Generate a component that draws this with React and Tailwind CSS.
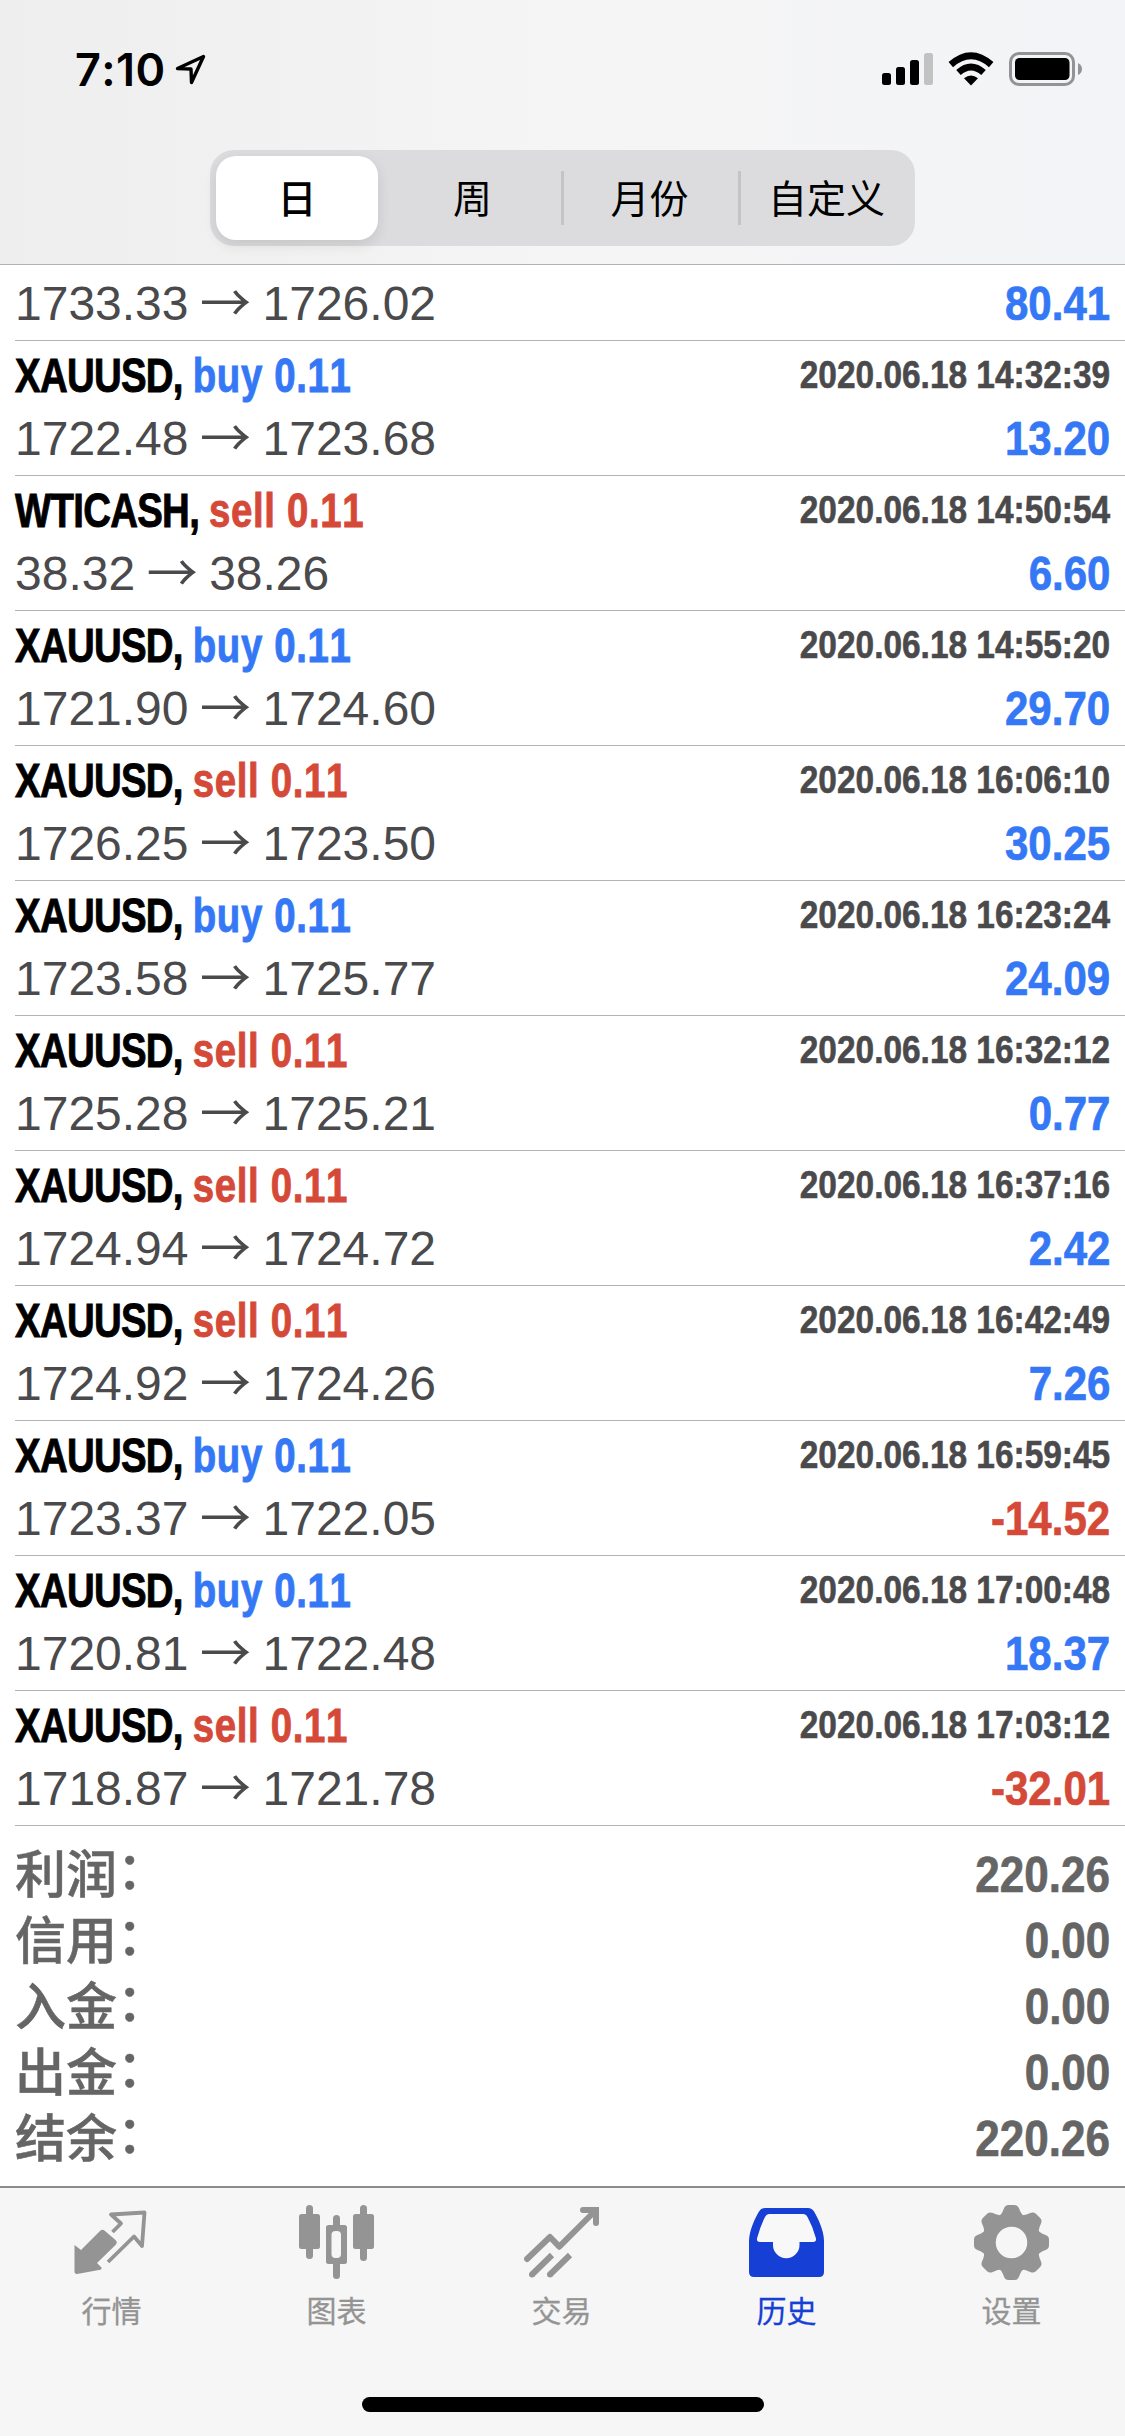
import React, { useState } from "react";

const deals = [
  { symbol: "XAUUSD", side: "buy", volume: "0.11", time: "2020.06.18 14:32:39", open: "1722.48", close: "1723.68", profit: "13.20" },
  { symbol: "WTICASH", side: "sell", volume: "0.11", time: "2020.06.18 14:50:54", open: "38.32", close: "38.26", profit: "6.60" },
  { symbol: "XAUUSD", side: "buy", volume: "0.11", time: "2020.06.18 14:55:20", open: "1721.90", close: "1724.60", profit: "29.70" },
  { symbol: "XAUUSD", side: "sell", volume: "0.11", time: "2020.06.18 16:06:10", open: "1726.25", close: "1723.50", profit: "30.25" },
  { symbol: "XAUUSD", side: "buy", volume: "0.11", time: "2020.06.18 16:23:24", open: "1723.58", close: "1725.77", profit: "24.09" },
  { symbol: "XAUUSD", side: "sell", volume: "0.11", time: "2020.06.18 16:32:12", open: "1725.28", close: "1725.21", profit: "0.77" },
  { symbol: "XAUUSD", side: "sell", volume: "0.11", time: "2020.06.18 16:37:16", open: "1724.94", close: "1724.72", profit: "2.42" },
  { symbol: "XAUUSD", side: "sell", volume: "0.11", time: "2020.06.18 16:42:49", open: "1724.92", close: "1724.26", profit: "7.26" },
  { symbol: "XAUUSD", side: "buy", volume: "0.11", time: "2020.06.18 16:59:45", open: "1723.37", close: "1722.05", profit: "-14.52" },
  { symbol: "XAUUSD", side: "buy", volume: "0.11", time: "2020.06.18 17:00:48", open: "1720.81", close: "1722.48", profit: "18.37" },
  { symbol: "XAUUSD", side: "sell", volume: "0.11", time: "2020.06.18 17:03:12", open: "1718.87", close: "1721.78", profit: "-32.01" },
];

const summary = [
  { label: "利润", value: "220.26" },
  { label: "信用", value: "0.00" },
  { label: "入金", value: "0.00" },
  { label: "出金", value: "0.00" },
  { label: "结余", value: "220.26" },
];

const periods = ["日", "周", "月份", "自定义"];

const StatusBar = () => (
  <div className="flex h-[138px] items-center justify-between pl-[75px] pr-[42px]">
    <div className="flex items-center gap-[9px]">
      <span className="font-['Inter',sans-serif] text-[45px] font-semibold leading-none tracking-[0.4px]">7:10</span>
      <svg width="31" height="31" viewBox="0 0 31 31" fill="none" stroke="black" strokeWidth="3.4" strokeLinejoin="round">
        <path d="M28.5 2.5 L2.5 14.5 L16 15 L16.5 28.5 Z" />
      </svg>
    </div>
    <div className="flex items-center">
      <svg width="52" height="34" viewBox="0 0 52 34">
        <rect x="0" y="21" width="9" height="12" rx="2.5" />
        <rect x="14" y="15" width="9" height="18" rx="2.5" />
        <rect x="28" y="8" width="9" height="25" rx="2.5" />
        <rect x="42" y="1" width="9" height="32" rx="2.5" fill="#c2c2c3" />
      </svg>
      <svg className="ml-[14px]" width="46" height="34" viewBox="0 0 46 34">
        <path d="M23 33.5 L16 26.3 Q23 20.5 30 26.3 Z" />
        <path d="M10.5 20.5 Q23 9.5 35.5 20.5" fill="none" stroke="black" strokeWidth="6.8" />
        <path d="M2.8 12.6 Q23 -5.2 43.2 12.6" fill="none" stroke="black" strokeWidth="6.8" />
      </svg>
      <svg className="ml-[15px]" width="74" height="34" viewBox="0 0 74 34">
        <rect x="1.5" y="1.5" width="63" height="31" rx="8.5" fill="none" stroke="#939395" strokeWidth="3" />
        <rect x="6" y="6" width="54.5" height="22" rx="4.5" />
        <path d="M69 11 Q73 13 73 17 Q73 21 69 23 Z" fill="#939395" />
      </svg>
    </div>
  </div>
);

const DealRow = ({ deal }) => (
  <div className="ml-[15px] flex h-[135px] flex-col border-b border-[#b4b4b6] pr-[15px] pt-[3px]">
    <div className="flex h-[63px] justify-between font-bold leading-[63px]">
      <div className="flex origin-left scale-x-80 whitespace-pre text-[48px] [-webkit-text-stroke:0.9px]">
        <span className="tracking-[-0.9px]">{deal.symbol}, </span>
        <span className={`tracking-[0.8px] ${deal.side === "buy" ? "text-[#3478f6]" : "text-[#d54938]"}`}>
          {deal.side} {deal.volume}
        </span>
      </div>
      <div className="origin-right scale-x-[0.857] text-[39px] leading-[61px] text-[#4a4a4c] [-webkit-text-stroke:0.6px]">{deal.time}</div>
    </div>
    <PriceLine deal={deal} />
  </div>
);

const PriceLine = ({ deal }) => (
  <div className="flex h-[63px] justify-between leading-[63px]">
    <div className="flex gap-[13px] text-[48px] text-[#4a4a4c]">
      <span>{deal.open}</span>
      <span className="-mt-[3px] flex w-12 justify-center font-['Noto_Sans_CJK_SC',sans-serif] text-[51px]">→</span>
      <span>{deal.close}</span>
    </div>
    <div
      className={`origin-right scale-x-[0.875] text-[48px] font-bold [-webkit-text-stroke:0.7px] ${
        deal.profit.startsWith("-") ? "text-[#d54938]" : "text-[#3478f6]"
      }`}
    >
      {deal.profit}
    </div>
  </div>
);

const QuotesIcon = () => (
  <svg width="75" height="75" viewBox="0 0 75 75">
    <path d="M0.5 40 L7 45 L26 26 Q28.5 23.5 31 26 L41.5 35 Q44 37.5 41.5 40 L23 58 L27.5 62.5 Q28 64.5 25 65 L3 69 Q0.5 69 0.5 66.5 Z" />
    <path d="M38.5 27 L47 18.5 L37 9.5 L70.5 7.5 L68 41 L60 31.5 L34 57" fill="none" stroke="currentColor" strokeWidth="3.8" strokeLinejoin="round" />
  </svg>
);

const ChartIcon = () => (
  <svg width="75" height="75" viewBox="0 0 75 75">
    <rect x="7" y="0" width="7" height="54" rx="3.5" />
    <rect x="0" y="9" width="21" height="35" rx="2.5" />
    <rect x="34" y="10" width="7" height="64" rx="3.5" />
    <rect x="27" y="20" width="21" height="39" rx="2.5" />
    <rect x="32.5" y="26" width="9.5" height="27" rx="4" fill="#f6f6f6" />
    <rect x="61" y="0" width="7" height="56" rx="3.5" />
    <rect x="54" y="9" width="21" height="35" rx="2.5" />
  </svg>
);

const TradeIcon = () => (
  <svg width="75" height="75" viewBox="0 0 75 75" fill="none" stroke="currentColor" strokeWidth="6">
    <path d="M3 54 L26 32 L35.3 41.7 L71 6" strokeLinecap="round" strokeLinejoin="round" />
    <path d="M59 5 H72 V18" strokeLinecap="round" />
    <path d="M8 69.5 L28 50 M26 69.5 L46 50" />
    <g fill="currentColor" stroke="none">
      <circle cx="8" cy="69.5" r="3" />
      <circle cx="26" cy="69.5" r="3" />
    </g>
  </svg>
);

const HistoryIcon = () => (
  <svg width="75" height="75" viewBox="0 0 75 75">
    <path d="M0 67 V36 C0 26 6 13 10 6.5 Q12 3 16 3 H59 Q63 3 65 6.5 C69 13 75 26 75 36 V67 Q75 72 70 72 H5 Q0 72 0 67 Z" />
    <path d="M20 9 H54 Q57 9 58.5 12 Q64 22 67 33.5 Q67.5 37 64 37 H50.5 V40 A13 13 0 0 1 24 40 V37 H11 Q7.5 37 8 33.5 Q11 22 16 12 Q17.5 9 20 9 Z" fill="#f8f8f8" />
  </svg>
);

const SettingsIcon = () => (
  <svg width="75" height="75" viewBox="0 0 75 75">
    <g transform="translate(37.5 37.5)">
      <circle r="22" fill="none" stroke="currentColor" strokeWidth="12.5" />
      {[0, 45, 90, 135, 180, 225, 270, 315].map((angle) => (
        <path
          key={angle}
          transform={`rotate(${angle})`}
          d="M-13 -26 Q-10 -28 -8.8 -31 L-7.6 -34 Q-6.3 -37.5 -3 -37.5 H3 Q6.3 -37.5 7.6 -34 L8.8 -31 Q10 -28 13 -26 L8 -20 H-8 Z"
        />
      ))}
    </g>
  </svg>
);

const tabs = [
  { label: "行情", icon: QuotesIcon },
  { label: "图表", icon: ChartIcon },
  { label: "交易", icon: TradeIcon },
  { label: "历史", icon: HistoryIcon },
  { label: "设置", icon: SettingsIcon },
];

const App = () => {
  const [period, setPeriod] = useState(0);
  const [tab, setTab] = useState(3);

  return (
    <div className="flex h-[2436px] w-[1125px] flex-col overflow-hidden bg-white font-['Liberation_Sans','Noto_Sans_CJK_SC',sans-serif] text-black [font-kerning:none]">
      <header className="h-[265px] shrink-0 border-b border-[#b2b2b3] bg-linear-to-r from-[#eeeeef] via-[#f5f5f5] to-[#f3f4f7]">
        <StatusBar />
        <div className="mx-auto mt-3 grid h-24 w-[705px] grid-cols-[174px_177px_177px_177px] items-center rounded-[24px] bg-[#dcdcde] font-['Noto_Sans_CJK_SC',sans-serif] text-[39px]">
          {periods.map((name, i) => (
            <button
              key={name}
              onClick={() => setPeriod(i)}
              className={`flex items-center justify-center pb-[3px] leading-none ${
                i === period ? "mx-[6px] h-[84px] rounded-[20px] bg-white font-medium shadow-[0_5px_14px_rgba(0,0,0,0.1)]" : "h-[54px]"
              } ${i > 1 ? "border-l-3 border-[#c4c4c7] pr-[3px]" : ""}`}
            >
              {name}
            </button>
          ))}
        </div>
      </header>

      <main className="flex-1">
        {/* first deal is scrolled half way under the header */}
        <div className="ml-[15px] h-[76px] border-b border-[#b4b4b6] pr-[15px] pt-[7px]">
          <PriceLine deal={{ open: "1733.33", close: "1726.02", profit: "80.41" }} />
        </div>
        {deals.map((deal) => (
          <DealRow key={deal.time} deal={deal} />
        ))}
        <div className="px-[15px] pt-4 text-[#656565]">
          {summary.map((item) => (
            <div key={item.label} className="flex h-[66px] items-center justify-between">
              <span className="pt-[2px] text-[51px] font-medium leading-[64px] [-webkit-text-stroke:0.5px]">
                {item.label}
                <span className="relative -top-1">：</span>
              </span>
              <span className="origin-right scale-x-[0.88] text-[50px] font-bold leading-[66px] [-webkit-text-stroke:0.7px]">{item.value}</span>
            </div>
          ))}
        </div>
      </main>

      <footer className="flex h-[250px] shrink-0 flex-col border-t-2 border-[#8c8c8c] bg-[#f6f6f6]">
        <nav className="-ml-px flex pt-[17px]">
          {tabs.map(({ label, icon: Icon }, i) => (
            <button
              key={label}
              onClick={() => setTab(i)}
              className={`flex w-[225px] flex-col items-center fill-current ${i === tab ? "text-[#163fd6]" : "text-[#949494]"}`}
            >
              <Icon />
              <span className="mt-[7px] font-['Noto_Sans_CJK_SC',sans-serif] text-[30px] leading-[44px] [-webkit-text-stroke:0.3px]">{label}</span>
            </button>
          ))}
        </nav>
        <div className="mx-auto mb-6 mt-auto h-[15px] w-[402px] rounded-full bg-black" />
      </footer>
    </div>
  );
};

export default App;
